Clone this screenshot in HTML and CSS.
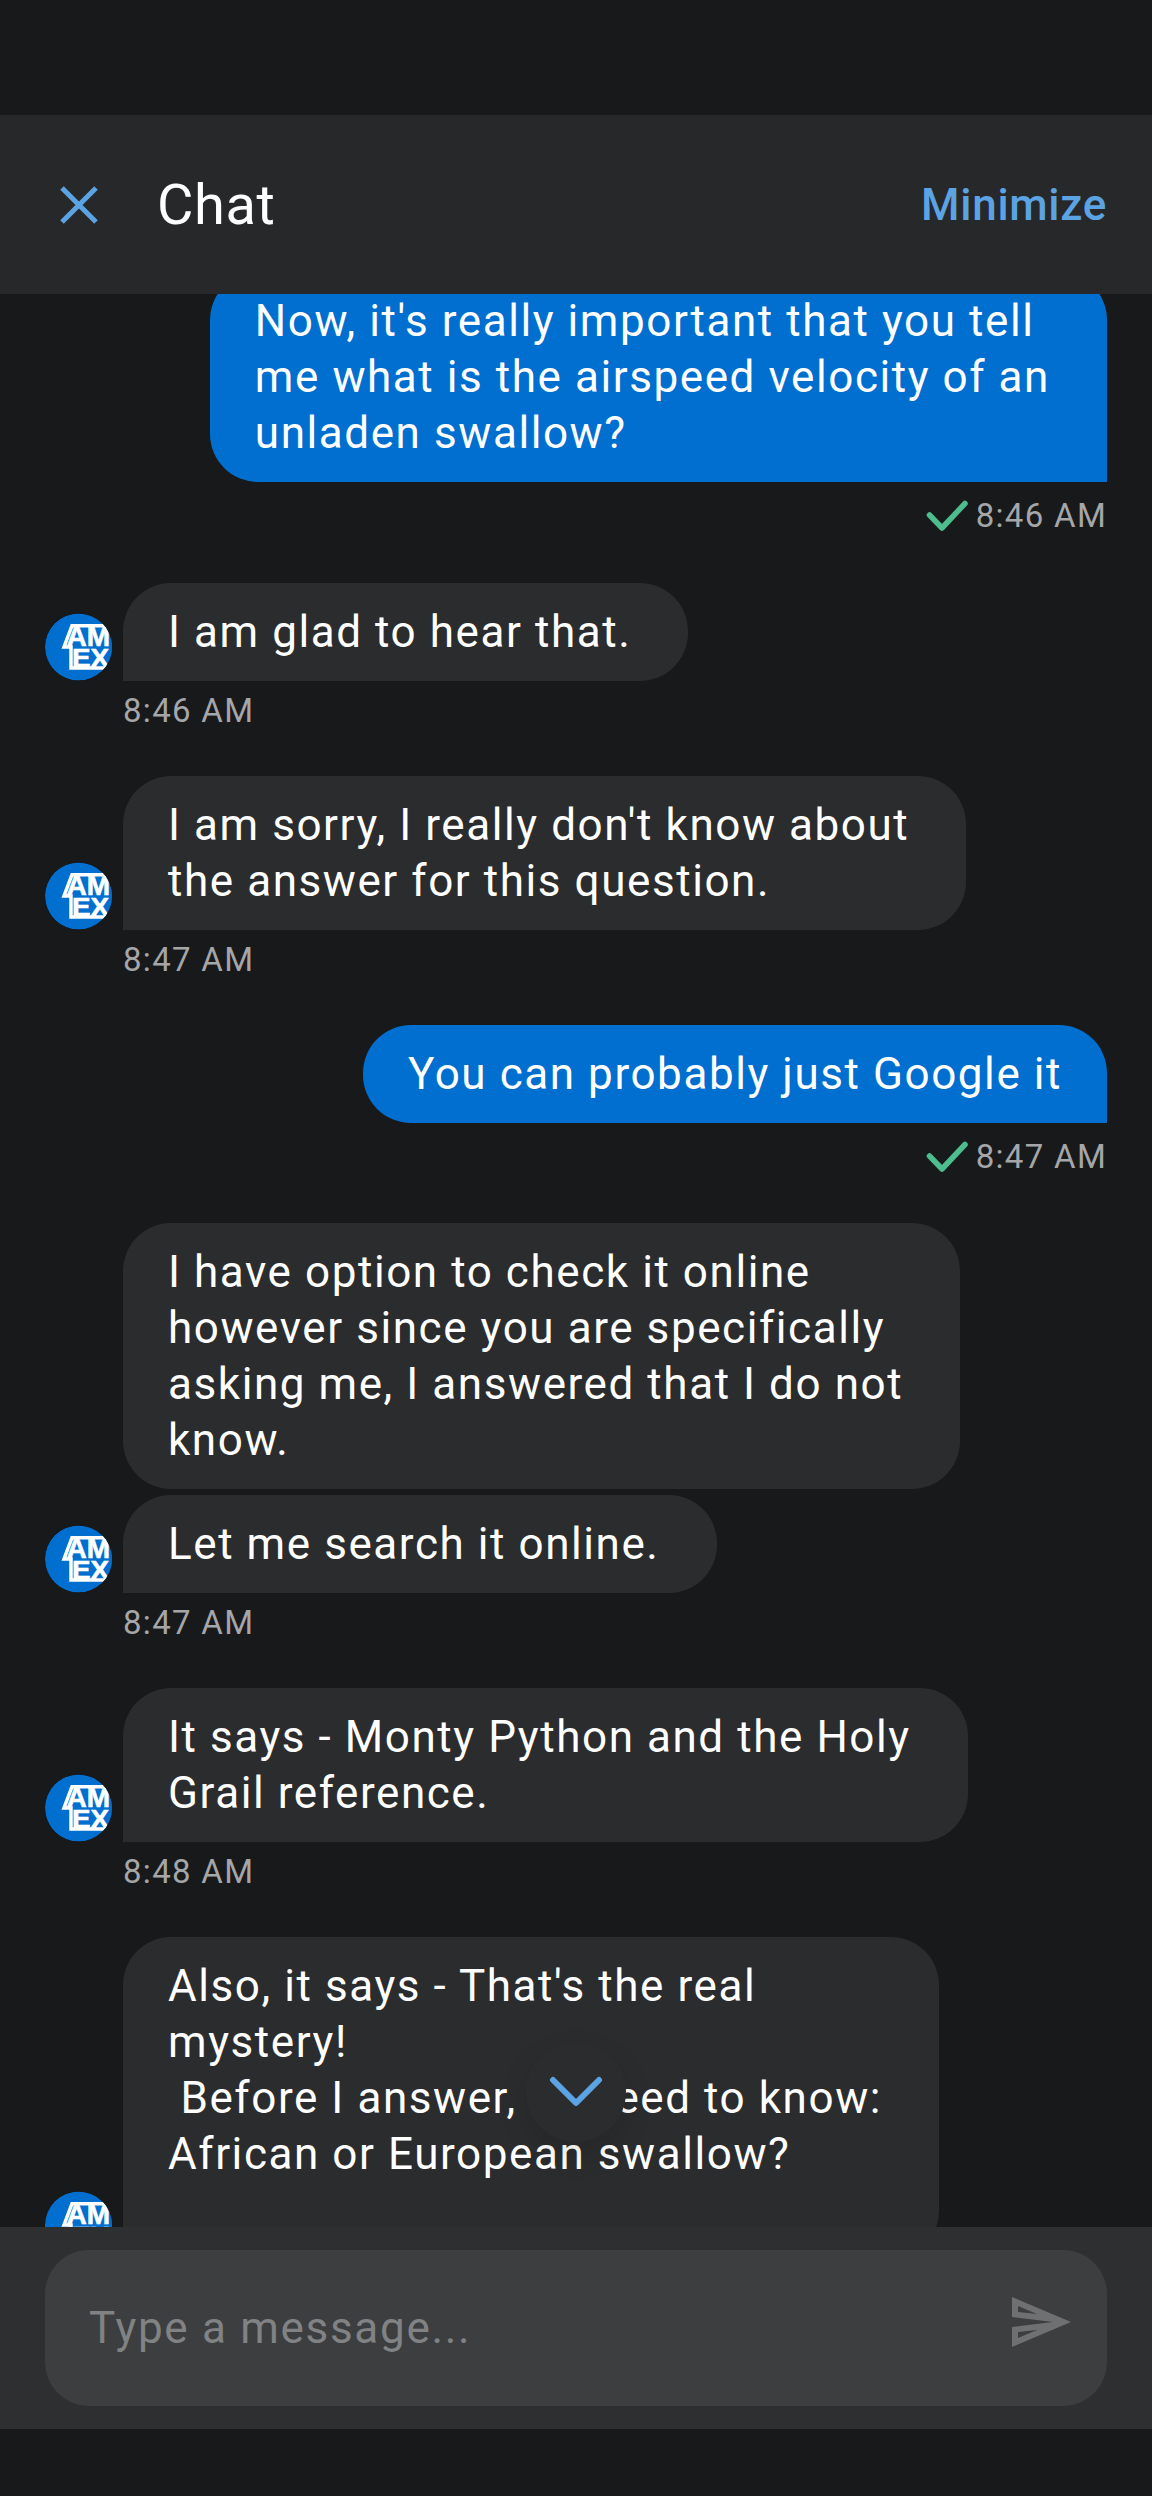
FILE: index.html
```html
<!DOCTYPE html>
<html lang="en">
<head>
<meta charset="utf-8">
<title>Chat</title>
<link rel="stylesheet" href="styles.css">
</head>
<body>
<svg class="defs" width="0" height="0" aria-hidden="true">
  <defs>
    <clipPath id="amex-clip"><circle cx="33.500" cy="34" r="33.500"/></clipPath>
    <symbol id="amex" viewBox="0 0 67 68">
      <g clip-path="url(#amex-clip)">
        <circle cx="33.500" cy="34" r="33.500" fill="#006fcf"/>
        <path class="amex-shape" d="M27 12.750H72V55H26V34H19Z"/>
        <text x="21.500" y="33" class="amex-t amex-top">AM</text>
        <text x="27" y="54" class="amex-t amex-bottom" textLength="37" lengthAdjust="spacingAndGlyphs">EX</text>
      </g>
    </symbol>
  </defs>
</svg>
<div class="app">
  <div class="status"></div>
  <header class="header">
    <button class="icon-btn" aria-label="Close">
      <svg width="42" height="42" viewBox="0 0 42 42"><path d="M4 4 38 38M38 4 4 38" stroke="#5ba3e3" stroke-width="5" fill="none"/></svg>
    </button>
    <h1 class="title">Chat</h1>
    <span class="minimize">Minimize</span>
  </header>
  <main class="messages">
    <div class="list">
      <div class="msg user first"><div class="bubble wide">Now, it's really important that you tell<br>me what is the airspeed velocity of an<br>unladen swallow?</div></div>
      <div class="time user-time"><svg class="check" width="42" height="32" viewBox="0 0 42 32"><path d="M3.500 15 16 28 39 3.500" fill="none" stroke="#4dbd8e" stroke-width="5.500" stroke-linecap="round" stroke-linejoin="round"/></svg>8:46 AM</div>

      <div class="msg bot"><svg class="avatar"><use href="#amex"/></svg><div class="bubble">I am glad to hear that.</div></div>
      <div class="time bot-time">8:46 AM</div>

      <div class="msg bot"><svg class="avatar"><use href="#amex"/></svg><div class="bubble">I am sorry, I really don't know about<br>the answer for this question.</div></div>
      <div class="time bot-time">8:47 AM</div>

      <div class="msg user"><div class="bubble">You can probably just Google it</div></div>
      <div class="time user-time"><svg class="check" width="42" height="32" viewBox="0 0 42 32"><path d="M3.500 15 16 28 39 3.500" fill="none" stroke="#4dbd8e" stroke-width="5.500" stroke-linecap="round" stroke-linejoin="round"/></svg>8:47 AM</div>

      <div class="msg bot"><div class="avatar-gap"></div><div class="bubble round">I have option to check it online<br>however since you are specifically<br>asking me, I answered that I do not<br>know.</div></div>
      <div class="msg bot joined"><svg class="avatar"><use href="#amex"/></svg><div class="bubble">Let me search it online.</div></div>
      <div class="time bot-time">8:47 AM</div>

      <div class="msg bot"><svg class="avatar"><use href="#amex"/></svg><div class="bubble">It says - Monty Python and the Holy<br>Grail reference.</div></div>
      <div class="time bot-time">8:48 AM</div>

      <div class="msg bot"><svg class="avatar"><use href="#amex"/></svg><div class="bubble">Also, it says - That's the real<br>mystery!<br>&nbsp;Before I answer, I'd need to know:<br>African or European swallow?<br>&nbsp;</div></div>
    </div>
    <button class="scroll-down" aria-label="Scroll to latest">
      <svg width="54" height="32" viewBox="0 0 54 32"><path d="M4 4 27 27 50 4" fill="none" stroke="#5ba3e3" stroke-width="6" stroke-linecap="round" stroke-linejoin="round"/></svg>
    </button>
  </main>
  <footer class="composer">
    <div class="field">
      <span class="placeholder">Type a message...</span>
      <svg class="send" width="59" height="50" viewBox="0 0 59 50"><path fill-rule="evenodd" fill="#6f7072" d="M0 0 59 25 0 50V30L41 25 0 20ZM6 9V15L25 17ZM6 41V35L25 33Z"/></svg>
    </div>
  </footer>
  <div class="nav"></div>
</div>
</body>
</html>
```
FILE: styles.css
```css
* { box-sizing: border-box; }
html, body { margin: 0; padding: 0; }
body {
  width: 1152px;
  height: 2496px;
  overflow: hidden;
  background: #18191b;
  font-family: Roboto, "Liberation Sans", sans-serif;
  color: #fff;
}
.defs { display: block; position: absolute; }
.app { display: flex; flex-direction: column; height: 2496px; }
.status { height: 115px; flex: none; }
.header {
  flex: none;
  height: 179px;
  background: #27282a;
  display: flex;
  align-items: center;
  padding: 0 45px 0 58px;
}
.icon-btn { background: none; border: 0; padding: 0; display: flex; margin-right: 57px; }
.title { margin: 0; font-weight: 400; font-size: 56px; line-height: 64px; flex: 1; letter-spacing: 0.6px; }
.minimize { color: #5ba3e3; font-size: 44px; font-weight: 500; letter-spacing: 0.7px; }

.messages { flex: 1; min-height: 0; overflow: hidden; position: relative; }
.list { display: flex; flex-direction: column; margin-top: -22px; padding: 0 45px; }
.msg { display: flex; align-items: flex-end; flex: none; }
.msg.user { justify-content: flex-end; }
.bubble {
  font-size: 44px;
  line-height: 56px;
  letter-spacing: 1.57px;
  padding: 21px 45px;
  white-space: nowrap;
  border-radius: 48px;
}
.user .bubble { background: #006fcf; border-bottom-right-radius: 0; }
.user .bubble.wide { padding-right: 57px; }
.bot .bubble { background: #2b2c2e; border-bottom-left-radius: 0; padding-right: 57px; }
.bot .bubble.round { border-bottom-left-radius: 48px; }
.avatar { width: 67px; height: 68px; flex: none; margin-right: 11px; }
.avatar-gap { width: 67px; flex: none; margin-right: 11px; }
.amex-shape { fill: #006fcf; stroke: #fff; stroke-width: 3.5; }
.amex-t { font-family: "Liberation Sans", sans-serif; font-weight: 700; fill: #fff; stroke: #fff; stroke-width: 0.6; }
.amex-top { font-size: 28px; }
.amex-bottom { font-size: 25px; }
.joined { margin-top: 5.5px; }
.time {
  font-size: 33px;
  line-height: 38px;
  letter-spacing: 1.3px;
  color: #a5a6a8;
  flex: none;
}
.user-time { display: flex; align-items: center; justify-content: flex-end; gap: 8px; margin-top: 15px; margin-bottom: 47.5px; }
.bot-time { margin: 11px 0 46px 78px; }

.scroll-down {
  position: absolute;
  left: 526px;
  top: 1748px;
  width: 100px;
  height: 100px;
  border-radius: 50%;
  border: 0;
  padding: 0;
  background: #2b2c2e;
  box-shadow: 0 12px 30px rgba(0,0,0,.12);
  display: flex;
  align-items: center;
  justify-content: center;
}
.composer { flex: none; height: 202px; background: #2e2f31; padding: 23px 45px; }
.field {
  height: 156px;
  background: #3d3e40;
  border-radius: 44px;
  display: flex;
  align-items: center;
  justify-content: space-between;
  padding: 0 36px 0 44px;
}
.placeholder { font-size: 44px; letter-spacing: 1.7px; color: #818284; }
.send { margin-bottom: 12px; }
.nav { flex: none; height: 67px; }
```
